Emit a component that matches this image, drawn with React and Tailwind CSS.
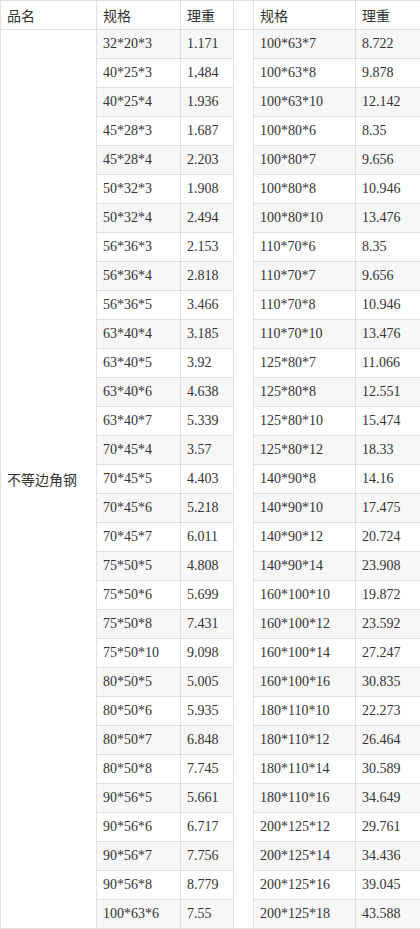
import React from 'react';

const left = [
  ['32*20*3', '1.171'], ['40*25*3', '1,484'], ['40*25*4', '1.936'], ['45*28*3', '1.687'],
  ['45*28*4', '2.203'], ['50*32*3', '1.908'], ['50*32*4', '2.494'], ['56*36*3', '2.153'],
  ['56*36*4', '2.818'], ['56*36*5', '3.466'], ['63*40*4', '3.185'], ['63*40*5', '3.92'],
  ['63*40*6', '4.638'], ['63*40*7', '5.339'], ['70*45*4', '3.57'], ['70*45*5', '4.403'],
  ['70*45*6', '5.218'], ['70*45*7', '6.011'], ['75*50*5', '4.808'], ['75*50*6', '5.699'],
  ['75*50*8', '7.431'], ['75*50*10', '9.098'], ['80*50*5', '5.005'], ['80*50*6', '5.935'],
  ['80*50*7', '6.848'], ['80*50*8', '7.745'], ['90*56*5', '5.661'], ['90*56*6', '6.717'],
  ['90*56*7', '7.756'], ['90*56*8', '8.779'], ['100*63*6', '7.55'],
];

const right = [
  ['100*63*7', '8.722'], ['100*63*8', '9.878'], ['100*63*10', '12.142'], ['100*80*6', '8.35'],
  ['100*80*7', '9.656'], ['100*80*8', '10.946'], ['100*80*10', '13.476'], ['110*70*6', '8.35'],
  ['110*70*7', '9.656'], ['110*70*8', '10.946'], ['110*70*10', '13.476'], ['125*80*7', '11.066'],
  ['125*80*8', '12.551'], ['125*80*10', '15.474'], ['125*80*12', '18.33'], ['140*90*8', '14.16'],
  ['140*90*10', '17.475'], ['140*90*12', '20.724'], ['140*90*14', '23.908'], ['160*100*10', '19.872'],
  ['160*100*12', '23.592'], ['160*100*14', '27.247'], ['160*100*16', '30.835'], ['180*110*10', '22.273'],
  ['180*110*12', '26.464'], ['180*110*14', '30.589'], ['180*110*16', '34.649'], ['200*125*12', '29.761'],
  ['200*125*14', '34.436'], ['200*125*16', '39.045'], ['200*125*18', '43.588'],
];

const cjk = "font-['Noto_Sans_CJK_SC',sans-serif]";
const serif = "font-['Liberation_Serif','Noto_Sans_CJK_SC',serif]";
const cell = 'border border-[#e0e0e0] pl-[6px] text-left align-middle leading-none font-normal';

export default function App() {
  return (
    <div className="w-[420px] bg-white text-[14px] text-[#333]">
      <table className="w-[420px] table-fixed border-collapse">
        <colgroup>
          <col className="w-[96px]" />
          <col className="w-[84px]" />
          <col className="w-[53px]" />
          <col className="w-[20px]" />
          <col className="w-[102px]" />
          <col className="w-[65px]" />
        </colgroup>
        <thead>
          <tr className="h-[29px]">
            <th className={`${cell} ${cjk}`}>品名</th>
            <th className={`${cell} ${cjk}`}>规格</th>
            <th className={`${cell} ${cjk}`}>理重</th>
            <th className={cell}></th>
            <th className={`${cell} ${cjk}`}>规格</th>
            <th className={`${cell} ${cjk}`}>理重</th>
          </tr>
        </thead>
        <tbody>
          {left.map((row, i) => {
            const bg = i % 2 === 0 ? 'bg-[#f7f7f7]' : 'bg-white';
            return (
              <tr key={i} className="h-[29px]">
                {i === 0 && (
                  <td rowSpan={left.length} className={`${cell} ${cjk} bg-white`}>不等边角钢</td>
                )}
                <td className={`${cell} ${serif} ${bg}`}>{row[0]}</td>
                <td className={`${cell} ${serif} ${bg}`}>{row[1]}</td>
                {i === 0 && <td rowSpan={left.length} className={`${cell} bg-white`}></td>}
                <td className={`${cell} ${serif} ${bg}`}>{right[i][0]}</td>
                <td className={`${cell} ${serif} ${bg}`}>{right[i][1]}</td>
              </tr>
            );
          })}
        </tbody>
      </table>
    </div>
  );
}
